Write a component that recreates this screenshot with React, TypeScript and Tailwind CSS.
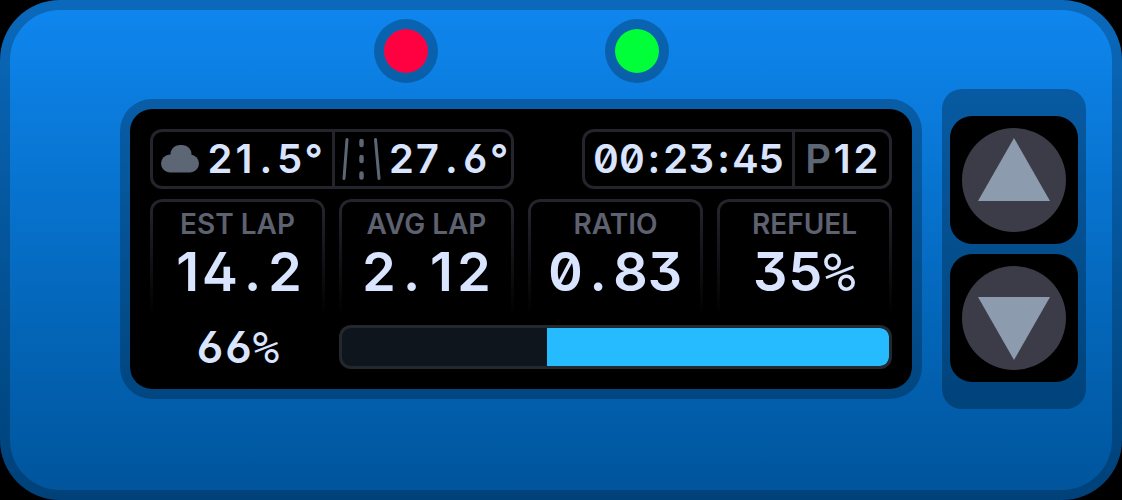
import { Fragment } from "react";

const READOUT = "font-['Inter',sans-serif] font-semibold text-[#d9e4ff] [font-feature-settings:'tnum','zero','ss01']";

const STATS = [
  { label: "EST LAP", value: "14.2" },
  { label: "AVG LAP", value: "2.12" },
  { label: "RATIO", value: "0.83" },
  { label: "REFUEL", value: "35%" },
];

function Digits({ value, cell }: { value: string; cell: string }) {
  return (
    <>
      {value.split(/([1.:°%])/).map((part, i) => {
        if (part === "%") {
          return (
            <span key={i} className="font-['DejaVu_Sans_Mono',monospace] leading-none font-normal">
              {part}
            </span>
          );
        }
        return /^[1.:°]$/.test(part) ? (
          <span key={i} className={`inline-block text-center [font-feature-settings:normal] ${cell}`}>
            {part}
          </span>
        ) : (
          <Fragment key={i}>{part}</Fragment>
        );
      })}
    </>
  );
}

function CloudIcon() {
  return (
    <svg viewBox="0 0 38 28" className="h-7 w-[38px] shrink-0 fill-[#5d6675]" aria-hidden>
      <rect y="9.5" width="38" height="18" rx="9" />
      <rect x="9.5" width="21" height="22" rx="9" />
    </svg>
  );
}

function RoadIcon() {
  return (
    <svg viewBox="0 0 40 44" className="h-11 w-10 shrink-0 fill-none stroke-[#5d6675]" strokeLinecap="round" aria-hidden>
      <path d="M6 2.5 3 41.5M34.5 2.5 38 41.5" strokeWidth="3" />
      <path d="M20.5 4v4M20.5 20v4M20.500 36.500v4" strokeWidth="4.500" />
    </svg>
  );
}

function Led({ color }: { color: string }) {
  return <span className={`size-16 rounded-full border-10 border-black/25 bg-clip-padding ${color}`} />;
}

function ArrowButton({ label, points }: { label: string; points: string }) {
  return (
    <button type="button" aria-label={label} className="flex size-32 items-center justify-center rounded-[22px] bg-black">
      <svg viewBox="0 0 104 104" className="size-[104px]" aria-hidden>
        <circle cx="52" cy="52" r="52" className="fill-[#3b3c47]" />
        <polygon points={points} className="fill-[#8d9bae]" />
      </svg>
    </button>
  );
}

function Screen() {
  return (
    <section className="grid grid-cols-4 gap-x-3.5 gap-y-2.5 rounded-[32px] border-10 border-black/25 bg-black bg-clip-padding p-5">
      <div className={`col-span-4 flex h-[60px] justify-between text-[40px] leading-[54px] ${READOUT}`}>
        <div className="flex w-[364px] rounded-xl border-3 border-[#23242c]">
          <div className="flex flex-1 items-center gap-2 border-r-3 border-[#23242c] pl-2">
            <CloudIcon />
            <span>
              <Digits value="21.5°" cell="w-[22px]" />
            </span>
          </div>
          <div className="flex flex-1 items-center gap-2 pl-1.5">
            <RoadIcon />
            <span>
              <Digits value="27.6°" cell="w-[22px]" />
            </span>
          </div>
        </div>
        <div className="flex rounded-xl border-3 border-[#23242c]">
          <div className="border-r-3 border-[#23242c] px-2">
            <Digits value="00:23:45" cell="w-[18px]" />
          </div>
          <div className="px-2.5">
            <span className="text-[#5d6675]">P</span>
            <Digits value="12" cell="w-[22px]" />
          </div>
        </div>
      </div>

      {STATS.map((stat) => (
        <div key={stat.label} className="relative flex h-[116px] flex-col items-center pt-[11px]">
          <div className="absolute inset-0 rounded-t-xl border-3 border-b-0 border-[#23242c] mask-b-from-10%" />
          <h2 className="font-['Inter',sans-serif] text-[28px] leading-7 font-semibold text-[#5d6170]">{stat.label}</h2>
          <p className={`mt-1.5 text-[54px] leading-[56px] ${READOUT}`}>
            <Digits value={stat.value} cell="w-[30px]" />
          </p>
        </div>
      ))}

      <p className={`h-11 text-center text-[44px] leading-[44px] ${READOUT}`}>
        <Digits value="66%" cell="w-7" />
      </p>
      <div
        role="progressbar"
        aria-label="Fuel"
        aria-valuenow={66}
        className="col-span-3 flex h-11 justify-end overflow-hidden rounded-xl border-3 border-[#23282f] bg-[#0f151c]"
      >
        <div className="w-[62.5%] rounded-r-lg bg-[#26bbff]" />
      </div>
    </section>
  );
}

export default function App() {
  return (
    <div className="min-h-screen bg-black">
      <main className="flex min-h-screen items-start gap-5 rounded-[60px] border-10 border-black/22 bg-linear-to-b from-[#0f87f0] to-[#00549b] bg-origin-border pr-[26px] pl-[110px]">
        <div className="flex-1 pt-[9px]">
          <div className="mb-4 flex justify-center gap-[167px]">
            <Led color="bg-[#ff0040]" />
            <Led color="bg-[#00ff38]" />
          </div>
          <Screen />
        </div>
        <div className="mt-[79px] flex h-80 flex-col justify-center gap-2.5 rounded-[20px] bg-black/28 px-2">
          <ArrowButton label="Up" points="52,10 88,73 16,73" />
          <ArrowButton label="Down" points="16,31 88,31 52,94" />
        </div>
      </main>
    </div>
  );
}
